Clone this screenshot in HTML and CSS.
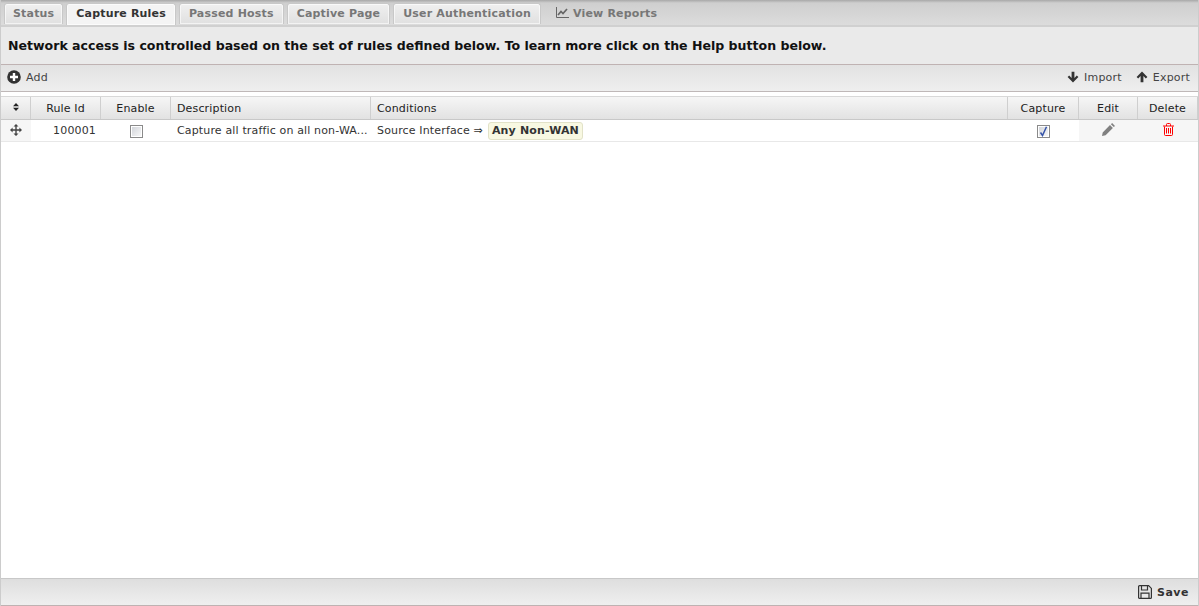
FILE: index.html
```html
<!DOCTYPE html>
<html lang="en">
<head>
<meta charset="utf-8">
<title>Capture Rules</title>
<link rel="stylesheet" href="styles.css">
</head>
<body>
<div class="page">
  <nav class="tabs">
    <a class="tab">Status</a>
    <a class="tab active">Capture Rules</a>
    <a class="tab">Passed Hosts</a>
    <a class="tab">Captive Page</a>
    <a class="tab">User Authentication</a>
    <a class="tab plain"><svg class="ico-chart" width="13" height="11" viewBox="0 0 13 11"><path d="M0.5 0v10.5H13" fill="none" stroke="#666" stroke-width="1"/><path d="M2 8l3-3.5 2 2L11 2" fill="none" stroke="#666" stroke-width="1.7"/></svg>View Reports</a>
  </nav>
  <div class="message">Network access is controlled based on the set of rules defined below. To learn more click on the Help button below.</div>
  <div class="toolbar">
    <a class="tool add"><svg width="14" height="14" viewBox="0 0 14 14"><circle cx="7" cy="7" r="6.8" fill="#333"/><path d="M7 3v8M3 7h8" stroke="#fff" stroke-width="2.4"/></svg>Add</a>
    <span class="spacer"></span>
    <a class="tool"><svg width="12" height="12" viewBox="0 0 12 12"><path d="M6 11.5L.6 6.1l1.6-1.6 2.4 2.4V.8h2.8v6.1l2.4-2.4 1.6 1.6z" fill="#333"/></svg>Import</a>
    <a class="tool"><svg width="12" height="12" viewBox="0 0 12 12"><path d="M6 .5l5.4 5.4-1.6 1.600-2.4-2.400v6.100H4.600V5.100L2.200 7.500.6 5.900z" fill="#333"/></svg>Export</a>
  </div>
  <div class="grid">
    <div class="row head">
      <div class="cell c-sort center"><svg class="up1" width="6" height="8" viewBox="0 0 6 8"><path d="M3 0l3 3.200H0zM3 8L0 4.800h6z" fill="#222"/></svg></div>
      <div class="cell c-id center">Rule Id</div>
      <div class="cell c-en center">Enable</div>
      <div class="cell c-desc">Description</div>
      <div class="cell c-cond">Conditions</div>
      <div class="cell c-cap center">Capture</div>
      <div class="cell c-edit center">Edit</div>
      <div class="cell c-del center">Delete</div>
    </div>
    <div class="row body">
      <div class="cell c-sort center shade"><svg class="up1" width="12" height="12" viewBox="0 0 12 12"><path d="M6 0l2.500 2.600H6.700v2.700h2.700V3.500L12 6 9.400 8.500V6.700H6.700v2.700h1.800L6 12 3.500 9.400h1.800V6.700H2.600v1.800L0 6l2.600-2.500v1.800h2.700V2.600H3.500z" fill="#444"/></svg></div>
      <div class="cell c-id num">100001</div>
      <div class="cell c-en center"><span class="check"></span></div>
      <div class="cell c-desc">Capture all traffic on all non-WA...</div>
      <div class="cell c-cond"><span>Source Interface ⇒</span><span class="tag">Any Non-WAN</span></div>
      <div class="cell c-cap center"><span class="check"><svg width="9" height="11" viewBox="0 0 9 11"><path d="M1.500 6.500l2 3L7.500 .8" fill="none" stroke="#3553a8" stroke-width="1.500"/></svg></span></div>
      <div class="cell c-edit center shade"><svg class="up1" width="13" height="13" viewBox="0 0 13 13"><path d="M0 13l.7-3.600L8 2.100l2.900 2.900-7.300 7.300zM8.900 1.200L10.100 0 13 2.900l-1.200 1.200z" fill="#808080"/></svg></div>
      <div class="cell c-del center shade"><svg class="up1" width="11" height="13" viewBox="0 0 11 13"><path d="M1.500 3.500v8q0 1 1 1h6q1 0 1-1v-8M0 3h11M3.500 3V1.400q0-.9 1-.9h2q1 0 1 .9V3M3.500 5v5.500M5.500 5v5.500M7.500 5v5.500" fill="none" stroke="#f00" stroke-width="1"/></svg></div>
    </div>
  </div>
  <div class="footer">
    <a class="save"><svg width="14" height="14" viewBox="0 0 14 14"><path d="M.6 1.600q0-1 1-1h9L13.400 3.400v9q0 1-1 1H1.600q-1 0-1-1zM3.500 1v4h6V1M3 13V8.200h8V13" fill="none" stroke="#333" stroke-width="1.200"/></svg>Save</a>
  </div>
</div>
</body>
</html>
```
FILE: styles.css
```css
* { box-sizing: border-box; }
html, body { margin: 0; padding: 0; height: 100%; overflow: hidden; }
body { font-family: "DejaVu Sans", sans-serif; font-size: 11px; color: #333; background: #fff; }
.page { display: flex; flex-direction: column; height: 606px; border-left: 1px solid #ccc; border-right: 1px solid #ccc; }

.tabs { display: flex; height: 27px; gap: 3px; padding: 3px 0 0 3px; background: linear-gradient(#a8a8a8 0, #cfcfcf 3px, #dcdcdc 100%); border-bottom: 2px solid #d0d0d0; }
.tab { height: 21px; padding: 0 9px; line-height: 20px; font-weight: bold; font-size: 11px; letter-spacing: .18px; color: #777; background: linear-gradient(#f0f0f0, #e0e0e0); border: 1px solid #c8c8c8; border-bottom: 0; border-radius: 3px 3px 0 0; box-shadow: inset 0 0 0 1px rgba(255,255,255,.6); }
.tab:first-child { padding: 0 8px; }
.tab.active { height: 22px; color: #333; background: #f4f4f4; }
.tab.plain { background: none; border: 0; box-shadow: none; padding-left: 12px; line-height: 22px; }
.ico-chart { margin-right: 4px; vertical-align: -1px; }

.message { height: 38px; padding: 0 7px; line-height: 37px; font-size: 12.56px; font-weight: bold; color: #111; background: #eaeaea; border-bottom: 1px solid #bfb2b2; }
.toolbar { display: flex; align-items: center; height: 27px; padding: 0 8px 2px 6px; gap: 14px; background: linear-gradient(#e2e2e2, #efefef); border-bottom: 1px solid #bfb8b8; }
.spacer { flex: 1; }
.tool { display: flex; align-items: center; gap: 5px; letter-spacing: .2px; color: #444; }

.grid { flex: 1; margin-top: 4px; border-top: 1px solid #d8d8d8; }
.row { display: flex; }
.head { height: 23px; background: linear-gradient(#f6f6f6, #e2e2e2); border-bottom: 1px solid #c8c8c8; color: #222; }
.head .cell { border-right: 1px solid #cfcfcf; }
.body { height: 22px; border-bottom: 1px solid #e8e8e8; }
.cell { display: flex; align-items: center; padding: 0 6px; letter-spacing: .15px; white-space: nowrap; overflow: hidden; }
.center { justify-content: center; }
.num { justify-content: flex-end; padding-right: 5px; }
.shade { background: #f6f6f6; }
.up1 { margin-bottom: 2px; }
.c-sort { width: 30px; }
.c-id { width: 70px; }
.c-en { width: 70px; }
.c-desc { width: 200px; }
.c-cond { flex: 1; gap: 5px; }
.c-cap { width: 71px; }
.c-edit { width: 59px; }
.c-del { width: 60px; }
.check { display: flex; align-items: center; justify-content: center; width: 13px; height: 13px; border: 1px solid #8a8a8a; background: linear-gradient(135deg, #cfd2d8, #fafafa); box-shadow: inset 0 0 0 1px #fff; margin-top: 2px; }
.tag { padding: 0 3px; height: 18px; line-height: 16px; font-weight: bold; color: #333; background: #f8f8e2; border: 1px solid #e2e2c8; border-radius: 3px; }

.footer { display: flex; justify-content: flex-end; align-items: center; height: 28px; padding: 0 9px; background: linear-gradient(#dedede, #efefef); border-top: 1px solid #c8c8c8; border-bottom: 1px solid #bfb2b2; }
.save { display: flex; align-items: center; gap: 5px; font-weight: bold; letter-spacing: .5px; color: #333; }
```
